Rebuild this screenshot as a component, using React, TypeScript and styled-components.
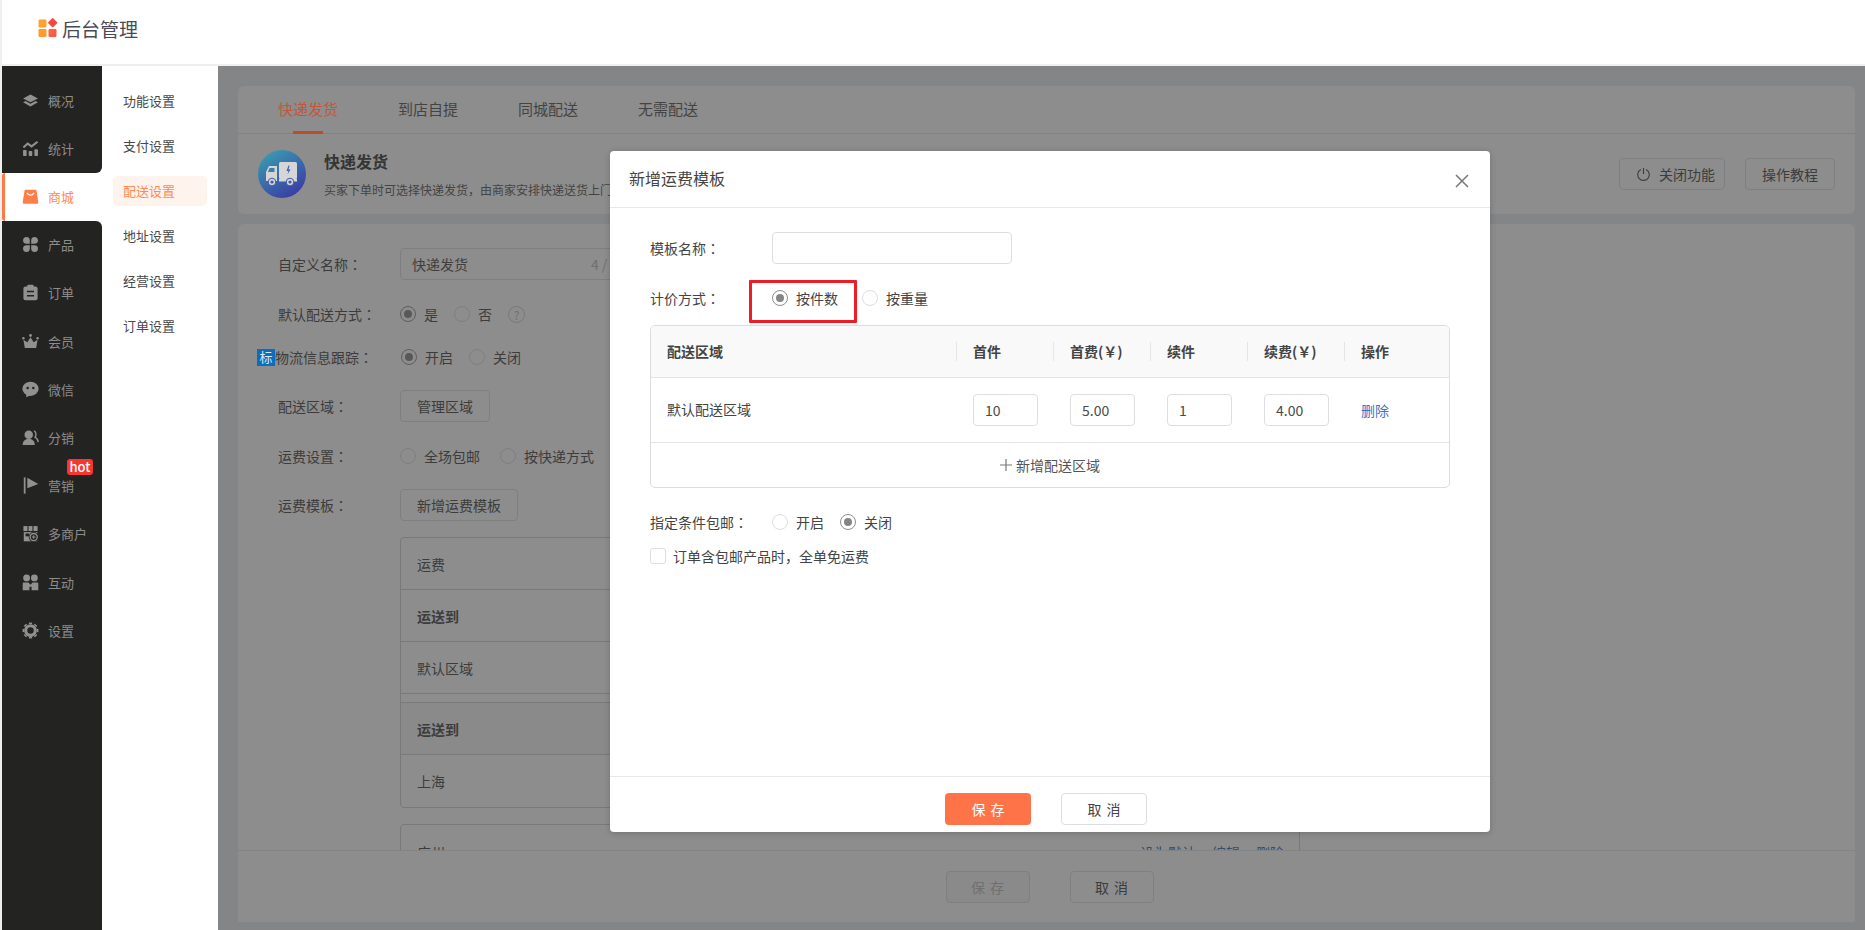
import React from "react";
import styled, { createGlobalStyle } from "styled-components";

const GlobalStyle = createGlobalStyle`
  html, body {
    margin: 0;
    padding: 0;
    height: 100%;
    overflow: hidden;
  }
  body {
    font-family: "Noto Sans CJK SC", "Noto Sans", sans-serif;
    font-size: 14px;
    color: #333;
  }
  * {
    box-sizing: border-box;
  }
`;

const Page = styled.div`
  width: 1865px;
  height: 930px;
  border-left: 2px solid #efefef;
  display: flex;
  flex-direction: column;
  background: #fff;
  position: relative;
`;

const Header = styled.header`
  height: 66px;
  flex: none;
  border-bottom: 2px solid #f0f0f0;
  display: flex;
  align-items: center;
  gap: 4px;
  padding: 0 0 8px 36px;
  font-size: 19px;
  color: #4a4a55;
`;

const Body = styled.div`
  flex: 1;
  min-height: 0;
  display: flex;
`;

const Sidebar = styled.aside`
  width: 100px;
  flex: none;
  display: flex;
  flex-direction: column;
  background: #fff;
`;

const NavGroup = styled.div<{ $grow?: boolean; $first?: boolean }>`
  background: #232322;
  padding-top: ${(p) => (p.$first ? "10.6px" : "0")};
  flex: ${(p) => (p.$grow ? "1" : "none")};
  border-radius: ${(p) => (p.$first ? "0 0 6px 0" : "0 6px 0 0")};
`;

const NavItem = styled.div<{ $active?: boolean }>`
  height: 48.2px;
  display: flex;
  align-items: center;
  gap: 9.5px;
  padding-left: 19.5px;
  padding-bottom: 1px;
  font-size: 13px;
  position: relative;
  color: ${(p) => (p.$active ? "#ff8b55" : "#8c8c8c")};
  background: ${(p) => (p.$active ? "#fff" : "transparent")};
  border-left: ${(p) => (p.$active ? "3px solid #ff7a4a" : "0")};
  ${(p) => p.$active && "padding-left: 16.5px; border-radius: 3px 0 0 3px;"}
  svg {
    width: 17px;
    height: 17px;
    flex: none;
    color: ${(p) => (p.$active ? "#ff7d47" : "#919191")};
  }
`;

const HotBadge = styled.span`
  position: absolute;
  left: 65px;
  top: -3px;
  width: 26px;
  height: 16px;
  border-radius: 3px;
  background: #f5372f;
  color: #fff;
  font-size: 13px;
  font-weight: 500;
  line-height: 15px;
  text-align: center;
`;

const SubMenu = styled.nav`
  width: 116px;
  flex: none;
  padding: 20px 11px 0;
  background: #fff;
  display: flex;
  flex-direction: column;
  gap: 15px;
`;

const SubItem = styled.div<{ $active?: boolean }>`
  height: 30px;
  line-height: 30px;
  padding-left: 10px;
  border-radius: 5px;
  font-size: 13px;
  color: ${(p) => (p.$active ? "#ff8b55" : "#4a4a4a")};
  background: ${(p) => (p.$active ? "#fff3ee" : "transparent")};
`;

const Main = styled.main`
  flex: 1;
  min-width: 0;
  padding: 20px 10px 8px 20px;
  background: #eaecef;
  display: flex;
  flex-direction: column;
  gap: 10px;
`;

const Card = styled.section`
  background: #fff;
  border-radius: 6px;
`;

const Tabs = styled.div`
  height: 48px;
  display: flex;
  gap: 60px;
  padding-left: 40px;
  border-bottom: 1px solid #e6e6e6;
`;

const Tab = styled.div<{ $active?: boolean }>`
  position: relative;
  z-index: ${(p) => (p.$active ? 11 : "auto")};
  font-size: 15px;
  line-height: 46px;
  color: ${(p) => (p.$active ? "#c5563a" : "#555")};
  ${(p) =>
    p.$active &&
    `&::after {
      content: "";
      position: absolute;
      left: 15px;
      bottom: -1px;
      width: 30px;
      height: 3px;
      background: #bb4c2e;
    }`}
`;

const Intro = styled.div`
  height: 80px;
  display: flex;
  align-items: center;
  padding: 0 20px;
  gap: 18px;
`;

const IntroBadge = styled.div`
  width: 48px;
  height: 48px;
  flex: none;
  position: relative;
  z-index: 11;
  svg {
    display: block;
    width: 100%;
    height: 100%;
  }
`;

const IntroText = styled.div`
  flex: 1;
`;

const IntroTitle = styled.div`
  font-size: 16px;
  font-weight: 700;
  line-height: 24px;
`;

const IntroDesc = styled.div`
  font-size: 12px;
  line-height: 18px;
  margin-top: 8px;
  color: #555;
`;

const OutlineButton = styled.button<{ $spaced?: boolean; $muted?: boolean }>`
  height: 32px;
  padding: 0 16px;
  display: inline-flex;
  align-items: center;
  justify-content: center;
  gap: 8px;
  background: #fff;
  border: 1px solid #dcdee2;
  border-radius: 4px;
  font: inherit;
  font-size: 14px;
  color: ${(p) => (p.$muted ? "#bbb" : "#444")};
  ${(p) => p.$spaced && "width: 84px; padding: 0 0 0 5px; letter-spacing: 5px;"}
  ${(p) => p.$muted && "background: #f7f7f7;"}
`;

const PowerButton = styled(OutlineButton)`
  padding: 0 9px 0 16px;
  svg {
    width: 15px;
    height: 15px;
  }
`;

const IntroActions = styled.div`
  display: flex;
  gap: 20px;
`;

const FormCard = styled(Card)`
  flex: 1;
  min-height: 0;
  display: flex;
  flex-direction: column;
`;

const FormScroll = styled.div`
  flex: 1;
  min-height: 0;
  overflow: hidden;
  padding: 24px 0 0 40px;
`;

const Row = styled.div<{ $mb?: number }>`
  display: flex;
  align-items: center;
  min-height: 32px;
  margin-bottom: ${(p) => p.$mb ?? 18}px;
`;

const Label = styled.div<{ $tagged?: boolean }>`
  width: ${(p) => (p.$tagged ? "144px" : "122px")};
  flex: none;
  color: #444;
  font-size: 14px;
  white-space: nowrap;
  ${(p) => p.$tagged && "margin-left: -21px; display: flex; align-items: center;"}
`;

const Colon = styled.span`
  font-family: "Noto Sans CJK TC", sans-serif;
`;

const TagMark = styled.span`
  width: 18px;
  height: 17px;
  flex: none;
  background: #0c6cbd;
  color: #dbe9f5;
  font-size: 13px;
  line-height: 16px;
  text-align: center;
  position: relative;
  z-index: 11;
`;

const TextInput = styled.div<{ $w: number }>`
  width: ${(p) => p.$w}px;
  height: 32px;
  flex: none;
  display: flex;
  align-items: center;
  justify-content: space-between;
  padding: 0 11px;
  border: 1px solid #dcdee2;
  border-radius: 4px;
  background: #fff;
  color: #4a4a4a;
`;

const Counter = styled.span`
  color: #bbb;
`;

const RadioGroup = styled.div<{ $gap?: number }>`
  display: flex;
  align-items: center;
  gap: ${(p) => p.$gap ?? 16}px;
`;

const RadioItem = styled.label`
  display: flex;
  align-items: center;
  gap: 8px;
  color: #444;
  position: relative;
`;

const RadioDot = styled.span<{ $on?: boolean }>`
  width: 16px;
  height: 16px;
  flex: none;
  border-radius: 50%;
  background: #fff;
  border: 1px solid ${(p) => (p.$on ? "#8f8f8f" : "#dcdee2")};
  display: flex;
  align-items: center;
  justify-content: center;
  &::after {
    content: "";
    width: 8px;
    height: 8px;
    border-radius: 50%;
    background: ${(p) => (p.$on ? "#858585" : "transparent")};
  }
`;

const HelpMark = styled.span`
  width: 17px;
  height: 17px;
  border-radius: 50%;
  border: 1px solid #ccc;
  color: #bbb;
  font-size: 12px;
  line-height: 15px;
  text-align: center;
`;

const TemplateBox = styled.div`
  width: 900px;
  margin: 0 0 16px 122px;
  border: 1px solid #d0d0d0;
  border-radius: 4px;
`;

const BoxRow = styled.div<{ $head?: boolean; $h?: number; $last?: boolean }>`
  height: ${(p) => p.$h ?? 52}px;
  padding: 0 15px 0 16px;
  display: flex;
  align-items: center;
  justify-content: space-between;
  color: #444;
  font-weight: ${(p) => (p.$head ? 700 : 400)};
  border-bottom: ${(p) => (p.$last ? "0" : "1px solid #d0d0d0")};
`;

const BoxHeadRow = styled(BoxRow)`
  background: #f7f7f7;
`;

const BoxGap = styled.div`
  height: 9px;
  border-bottom: 1px solid #d0d0d0;
`;

const BoxLinks = styled.div`
  display: flex;
  gap: 16px;
  color: #2d6cc0;
`;

const FormFooter = styled.div`
  height: 72px;
  flex: none;
  border-top: 1px solid #e8e8e8;
  display: flex;
  justify-content: center;
  align-items: center;
  gap: 40px;
  padding-left: 6px;
  background: #fff;
`;

const Mask = styled.div`
  position: absolute;
  left: 216px;
  top: 66px;
  right: 0;
  bottom: 0;
  background: rgba(55, 55, 55, 0.57);
  z-index: 10;
`;

const Modal = styled.div`
  position: absolute;
  left: 608px;
  top: 151px;
  width: 880px;
  height: 681px;
  z-index: 20;
  background: #fff;
  border-radius: 4px;
  box-shadow: 0 1px 6px rgba(0, 0, 0, 0.2);
  display: flex;
  flex-direction: column;
`;

const ModalHeader = styled.div`
  height: 57px;
  flex: none;
  padding: 0 21px 2px 19px;
  border-bottom: 1px solid #e8e8e8;
  display: flex;
  align-items: center;
  justify-content: space-between;
  font-size: 16px;
  color: #444;
  svg {
    width: 14px;
    height: 14px;
    color: #777;
    display: block;
    margin-top: 6px;
  }
`;

const ModalBody = styled.div`
  flex: 1;
  min-height: 0;
  padding: 24px 40px 0;
`;

const ModalFooter = styled.div`
  height: 56px;
  flex: none;
  padding: 16px 8px 0 0;
  border-top: 1px solid #e8e8e8;
  display: flex;
  justify-content: center;
  gap: 30px;
`;

const PrimaryButton = styled.button`
  width: 86px;
  height: 32px;
  padding: 0 0 0 5px;
  border: 0;
  border-radius: 4px;
  background: #ff7349;
  color: #fff;
  font: inherit;
  letter-spacing: 5px;
`;

const ModalCancel = styled(OutlineButton)`
  width: 86px;
`;

const Highlight = styled.div`
  position: absolute;
  left: -23px;
  right: -19px;
  top: -8px;
  height: 43px;
  border: 3.5px solid #ee1c25;
  border-radius: 1px;
  pointer-events: none;
`;

const FeeTable = styled.div`
  border: 1px solid #dcdcdc;
  border-radius: 5px;
  margin-bottom: 18px;
  overflow: hidden;
`;

const FeeRow = styled.div<{ $head?: boolean }>`
  display: grid;
  grid-template-columns: 305px 97px 97px 97px 97px 1fr;
  align-items: center;
  height: ${(p) => (p.$head ? 52 : 65)}px;
  border-bottom: 1px solid #e4e4e4;
  background: ${(p) => (p.$head ? "#f9f9f9" : "#fff")};
`;

const HeadCell = styled.div<{ $first?: boolean }>`
  height: 19px;
  line-height: 19px;
  padding-left: 16px;
  font-weight: 700;
  color: #444;
  white-space: nowrap;
  border-left: ${(p) => (p.$first ? "0" : "1px solid #e6e6e6")};
`;

const BodyCell = styled.div`
  padding-left: 17px;
  color: #444;
`;

const AreaCell = styled(BodyCell)`
  padding-left: 16px;
  padding-bottom: 2px;
`;

const NumberBox = styled(TextInput)`
  justify-content: flex-start;
  width: 65px;
`;

const LinkText = styled.span`
  color: #3d72c4;
`;

const AddRow = styled.div`
  height: 44px;
  display: flex;
  align-items: center;
  justify-content: center;
  gap: 4px;
  color: #555;
  svg {
    width: 12px;
    height: 12px;
    color: #777;
  }
`;

const CheckRow = styled.label`
  display: flex;
  align-items: center;
  gap: 7px;
  color: #444;
  margin-top: -10px;
`;

const CheckBox = styled.span`
  width: 16px;
  height: 16px;
  border: 1px solid #dcdee2;
  border-radius: 3px;
`;

const LogoMark = () => (
  <svg width="20" height="20" viewBox="0 0 20 20" style={{ display: "block" }}>
    <defs>
      <linearGradient id="lg1" x1="0" y1="0" x2="1" y2="1">
        <stop offset="0" stopColor="#ff6a3c" />
        <stop offset="1" stopColor="#f8524a" />
      </linearGradient>
    </defs>
    <rect x="0.5" y="1.5" width="8" height="8" rx="1.2" fill="#ffa12e" />
    <rect x="0.5" y="11" width="8" height="8" rx="1.2" fill="#ff9a2c" />
    <rect x="10.5" y="11" width="8" height="8" rx="1.2" fill="url(#lg1)" />
    <rect x="11.2" y="1.2" width="7" height="7" rx="1" transform="rotate(45 14.7 4.7)" fill="#f5483f" />
  </svg>
);

const icons: Record<string, React.ReactNode> = {
  layers: (
    <svg viewBox="0 0 24 24" fill="currentColor">
      <path d="M12 3.5 22.5 9 12 14.5 1.5 9Z" />
      <path d="M1.5 14.5 5 12.8l7 3.7 7-3.7 3.500 1.700L12 20.500Z" />
    </svg>
  ),
  chart: (
    <svg viewBox="0 0 24 24" fill="currentColor">
      <rect x="1.5" y="14" width="5" height="8.5" rx="1" />
      <rect x="9.5" y="15.5" width="5" height="7" rx="1" />
      <rect x="17.5" y="13" width="5" height="9.5" rx="1" />
      <path d="M2 10.5 8 5l5.5 4L22 2.5" fill="none" stroke="currentColor" strokeWidth="3" />
    </svg>
  ),
  bag: (
    <svg viewBox="0 0 24 24">
      <path d="M5 2.5h14a1.5 1.5 0 0 1 1.5 1.4L23 20a2 2 0 0 1-2 2.3H3A2 2 0 0 1 1 20L3.500 3.900A1.500 1.500 0 0 1 5 2.500Z" fill="currentColor" />
      <path d="M7.500 7.500c2.500 3.500 6.500 3.500 9 0" fill="none" stroke="#fff" strokeWidth="1.800" strokeLinecap="round" />
    </svg>
  ),
  grid: (
    <svg viewBox="0 0 24 24" fill="currentColor">
      <path d="M1.500 6.500a5 5 0 0 1 5-5c3 0 4.500 2 4.500 5v4.500H6.500c-3 0-5-1.500-5-4.500Z" />
      <path d="M22.500 6.500a5 5 0 0 0-5-5c-3 0-4.500 2-4.500 5v4.500h4.500c3 0 5-1.500 5-4.500Z" />
      <path d="M1.500 17.500a5 5 0 0 0 5 5c3 0 4.500-2 4.500-5V13H6.500c-3 0-5 1.500-5 4.500Z" />
      <path d="M22.500 17.500a5 5 0 0 1-5 5c-3 0-4.500-2-4.500-5V13h4.500c3 0 5 1.500 5 4.500Z" />
    </svg>
  ),
  clipboard: (
    <svg viewBox="0 0 24 24" fill="currentColor">
      <rect x="2" y="3.500" width="20" height="19.500" rx="3" />
      <rect x="7.500" y="1" width="9" height="5" rx="1.500" />
      <path d="M7 10.500h10M7 16.500h10" stroke="#232322" strokeWidth="2.200" />
    </svg>
  ),
  crown: (
    <svg viewBox="0 0 24 24" fill="currentColor">
      <path d="M2 9.500 7.500 13 12 6l4.500 7L22 9.500 20 21H4Z" />
      <circle cx="12" cy="3.500" r="2" />
      <circle cx="2" cy="7.500" r="1.700" />
      <circle cx="22" cy="7.500" r="1.700" />
    </svg>
  ),
  chat: (
    <svg viewBox="0 0 24 24" fill="currentColor">
      <ellipse cx="12" cy="11" rx="11.500" ry="10" />
      <path d="M6 17v6l6-3Z" />
      <circle cx="8" cy="10" r="1.800" fill="#232322" />
      <circle cx="16" cy="10" r="1.800" fill="#232322" />
    </svg>
  ),
  users: (
    <svg viewBox="0 0 24 24" fill="currentColor">
      <circle cx="9.500" cy="8" r="6" />
      <path d="M1 22.500c0-6 3.500-8.500 8.500-8.500s8.500 2.500 8.500 8.500Z" />
      <path d="M17 2.500c3 1.500 3.500 6 1.500 9 2.500 1.500 4 4 4.500 7" fill="none" stroke="currentColor" strokeWidth="2" />
    </svg>
  ),
  flag: (
    <svg viewBox="0 0 24 24" fill="currentColor">
      <rect x="2.500" y="0.500" width="2.500" height="23" />
      <path d="M7.500 1 23 10 7.500 16Z" />
    </svg>
  ),
  store: (
    <svg viewBox="0 0 24 24" fill="currentColor">
      <path d="M2 1.500h20v7H2Z" />
      <path d="M8.500 1.500v7M15.500 1.500v7" stroke="#232322" strokeWidth="1.500" />
      <rect x="2.500" y="10" width="19" height="13" />
      <rect x="5" y="12" width="5" height="4" fill="#232322" />
      <circle cx="16.500" cy="17" r="7" fill="#232322" />
      <circle cx="16.500" cy="17" r="5" fill="none" stroke="currentColor" strokeWidth="1.800" />
      <path d="M16.500 14.500v5M14 17h5" stroke="currentColor" strokeWidth="1.500" />
    </svg>
  ),
  team: (
    <svg viewBox="0 0 24 24" fill="currentColor">
      <circle cx="6.500" cy="5.500" r="4.800" />
      <circle cx="17.500" cy="5.500" r="4.800" />
      <path d="M1 13.500a1.500 1.500 0 0 1 1.500-1.500H9l3 3 3-3h6.500a1.500 1.500 0 0 1 1.500 1.500V23h-9.500v-5h-3v5H1Z" />
    </svg>
  ),
  gear: (
    <svg viewBox="0 0 24 24" fill="none" stroke="currentColor">
      <circle cx="12" cy="12" r="6.800" strokeWidth="4.400" />
      {[0, 45, 90, 135, 180, 225, 270, 315].map((a) => (
        <path key={a} d="M12 3V.800" strokeWidth="4.500" transform={`rotate(${a} 12 12)`} />
      ))}
    </svg>
  ),
};

type NavEntry = { label: string; icon: string; hot?: boolean };

const topNav: NavEntry[] = [
  { label: "概况", icon: "layers" },
  { label: "统计", icon: "chart" },
];

const restNav: NavEntry[] = [
  { label: "产品", icon: "grid" },
  { label: "订单", icon: "clipboard" },
  { label: "会员", icon: "crown" },
  { label: "微信", icon: "chat" },
  { label: "分销", icon: "users" },
  { label: "营销", icon: "flag", hot: true },
  { label: "多商户", icon: "store" },
  { label: "互动", icon: "team" },
  { label: "设置", icon: "gear" },
];

const subMenu = ["功能设置", "支付设置", "配送设置", "地址设置", "经营设置", "订单设置"];
const tabs = ["快递发货", "到店自提", "同城配送", "无需配送"];

const Nav = ({ item }: { item: NavEntry }) => (
  <NavItem>
    {icons[item.icon]}
    {item.label}
    {item.hot && <HotBadge>hot</HotBadge>}
  </NavItem>
);

const Radio = ({ on, children }: { on?: boolean; children: React.ReactNode }) => (
  <RadioItem>
    <RadioDot $on={on} />
    {children}
  </RadioItem>
);

const TruckBadge = () => (
  <svg viewBox="0 0 48 48">
    <defs>
      <linearGradient id="truckBg" x1="0.15" y1="0.05" x2="0.75" y2="1">
        <stop offset="0" stopColor="#3a9bb0" />
        <stop offset="1" stopColor="#3a3aa5" />
      </linearGradient>
    </defs>
    <circle cx="24" cy="24" r="24" fill="url(#truckBg)" />
    <path d="M8 28v-6l3-6h8v15H8Z" fill="#d6d6d6" />
    <rect x="21" y="12" width="18" height="17" rx="1.500" fill="#d6d6d6" />
    <rect x="21" y="29" width="18" height="2.500" fill="#d6d6d6" />
    <path d="M11.500 18h5v4h-6.500Z" fill="#3a80ab" />
    <path d="M30.500 15.500 28.500 21h2l-1 3.500 3-5h-2l1-4Z" fill="#3a62a8" />
    <circle cx="14" cy="32" r="3.800" fill="#d6d6d6" stroke="#3a5aa8" strokeWidth="1" />
    <circle cx="14" cy="32" r="1.600" fill="#3a5aa8" />
    <circle cx="32" cy="32" r="3.800" fill="#d6d6d6" stroke="#3a5aa8" strokeWidth="1" />
    <circle cx="32" cy="32" r="1.600" fill="#3a5aa8" />
  </svg>
);

const PowerIcon = () => (
  <svg viewBox="0 0 16 16" fill="none" stroke="currentColor" strokeWidth="1.200">
    <path d="M10.800 2.600a6.200 6.200 0 1 1-5.600 0" />
    <path d="M8 1v6.500" />
  </svg>
);

const App = () => (
  <Page>
    <GlobalStyle />
    <Header>
      <LogoMark />
      后台管理
    </Header>
    <Body>
      <Sidebar>
        <NavGroup $first>
          {topNav.map((n) => (
            <Nav key={n.label} item={n} />
          ))}
        </NavGroup>
        <NavItem $active>
          {icons.bag}
          商城
        </NavItem>
        <NavGroup $grow>
          {restNav.map((n) => (
            <Nav key={n.label} item={n} />
          ))}
        </NavGroup>
      </Sidebar>
      <SubMenu>
        {subMenu.map((s, i) => (
          <SubItem key={s} $active={i === 2}>
            {s}
          </SubItem>
        ))}
      </SubMenu>
      <Main>
        <Card>
          <Tabs>
            {tabs.map((t, i) => (
              <Tab key={t} $active={i === 0}>
                {t}
              </Tab>
            ))}
          </Tabs>
          <Intro>
            <IntroBadge>
              <TruckBadge />
            </IntroBadge>
            <IntroText>
              <IntroTitle>快递发货</IntroTitle>
              <IntroDesc>买家下单时可选择快递发货，由商家安排快递送货上门</IntroDesc>
            </IntroText>
            <IntroActions>
              <PowerButton>
                <PowerIcon />
                关闭功能
              </PowerButton>
              <OutlineButton>操作教程</OutlineButton>
            </IntroActions>
          </Intro>
        </Card>
        <FormCard>
          <FormScroll>
            <Row>
              <Label>
                自定义名称<Colon>：</Colon>
              </Label>
              <TextInput $w={238}>
                快递发货
                <Counter>4 / 20</Counter>
              </TextInput>
            </Row>
            <Row $mb={11}>
              <Label>
                默认配送方式<Colon>：</Colon>
              </Label>
              <RadioGroup>
                <Radio on>是</Radio>
                <Radio>否</Radio>
                <HelpMark>?</HelpMark>
              </RadioGroup>
            </Row>
            <Row $mb={17}>
              <Label $tagged>
                <TagMark>标</TagMark>
                物流信息跟踪<Colon>：</Colon>
              </Label>
              <RadioGroup>
                <Radio on>开启</Radio>
                <Radio>关闭</Radio>
              </RadioGroup>
            </Row>
            <Row>
              <Label>
                配送区域<Colon>：</Colon>
              </Label>
              <OutlineButton>管理区域</OutlineButton>
            </Row>
            <Row $mb={17}>
              <Label>
                运费设置<Colon>：</Colon>
              </Label>
              <RadioGroup $gap={20}>
                <Radio>全场包邮</Radio>
                <Radio>按快递方式</Radio>
              </RadioGroup>
            </Row>
            <Row $mb={16}>
              <Label>
                运费模板<Colon>：</Colon>
              </Label>
              <OutlineButton>新增运费模板</OutlineButton>
            </Row>
            <TemplateBox>
              <BoxRow>运费</BoxRow>
              <BoxRow $head>运送到</BoxRow>
              <BoxRow>默认区域</BoxRow>
              <BoxGap />
              <BoxHeadRow $head>运送到</BoxHeadRow>
              <BoxRow $last>上海</BoxRow>
            </TemplateBox>
            <TemplateBox>
              <BoxRow $h={54}>
                广州
                <BoxLinks>
                  <span>设为默认</span>
                  <span>编辑</span>
                  <span>删除</span>
                </BoxLinks>
              </BoxRow>
            </TemplateBox>
          </FormScroll>
          <FormFooter>
            <OutlineButton $spaced $muted>
              保存
            </OutlineButton>
            <OutlineButton $spaced>取消</OutlineButton>
          </FormFooter>
        </FormCard>
      </Main>
    </Body>
    <Mask />
    <Modal>
      <ModalHeader>
        新增运费模板
        <svg viewBox="0 0 14 14" fill="none" stroke="currentColor" strokeWidth="1.500">
          <path d="M1 1l12 12M13 1 1 13" />
        </svg>
      </ModalHeader>
      <ModalBody>
        <Row>
          <Label>
            模板名称<Colon>：</Colon>
          </Label>
          <TextInput $w={240} />
        </Row>
        <Row $mb={11}>
          <Label>
            计价方式<Colon>：</Colon>
          </Label>
          <RadioGroup $gap={24}>
            <Radio on>
              按件数
              <Highlight />
            </Radio>
            <Radio>按重量</Radio>
          </RadioGroup>
        </Row>
        <FeeTable>
          <FeeRow $head>
            <HeadCell $first>配送区域</HeadCell>
            <HeadCell>首件</HeadCell>
            <HeadCell>首费(￥)</HeadCell>
            <HeadCell>续件</HeadCell>
            <HeadCell>续费(￥)</HeadCell>
            <HeadCell>操作</HeadCell>
          </FeeRow>
          <FeeRow>
            <AreaCell>默认配送区域</AreaCell>
            <BodyCell>
              <NumberBox $w={65}>10</NumberBox>
            </BodyCell>
            <BodyCell>
              <NumberBox $w={65}>5.00</NumberBox>
            </BodyCell>
            <BodyCell>
              <NumberBox $w={65}>1</NumberBox>
            </BodyCell>
            <BodyCell>
              <NumberBox $w={65}>4.00</NumberBox>
            </BodyCell>
            <BodyCell>
              <LinkText>删除</LinkText>
            </BodyCell>
          </FeeRow>
          <AddRow>
            <svg viewBox="0 0 12 12" fill="none" stroke="currentColor" strokeWidth="1.200">
              <path d="M6 0v12M0 6h12" />
            </svg>
            新增配送区域
          </AddRow>
        </FeeTable>
        <Row>
          <Label>
            指定条件包邮<Colon>：</Colon>
          </Label>
          <RadioGroup>
            <Radio>开启</Radio>
            <Radio on>关闭</Radio>
          </RadioGroup>
        </Row>
        <CheckRow>
          <CheckBox />
          订单含包邮产品时，全单免运费
        </CheckRow>
      </ModalBody>
      <ModalFooter>
        <PrimaryButton>保存</PrimaryButton>
        <ModalCancel $spaced>取消</ModalCancel>
      </ModalFooter>
    </Modal>
  </Page>
);

export default App;
